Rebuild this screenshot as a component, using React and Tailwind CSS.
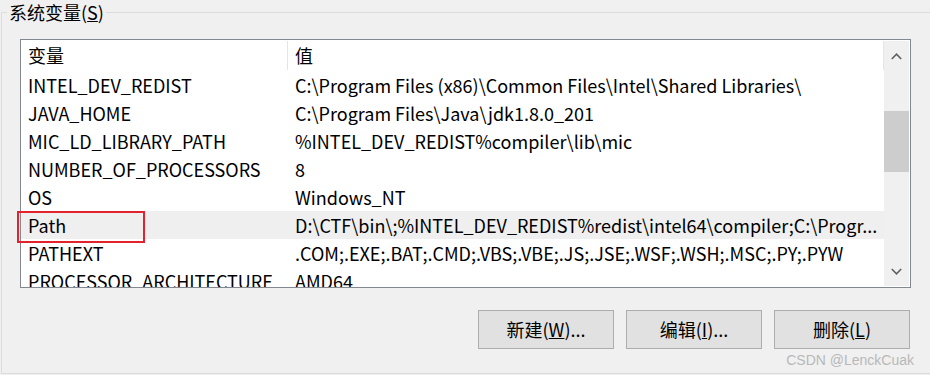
import React from "react";

const rows = [
  ["INTEL_DEV_REDIST", "C:\\Program Files (x86)\\Common Files\\Intel\\Shared Libraries\\"],
  ["JAVA_HOME", "C:\\Program Files\\Java\\jdk1.8.0_201"],
  ["MIC_LD_LIBRARY_PATH", "%INTEL_DEV_REDIST%compiler\\lib\\mic"],
  ["NUMBER_OF_PROCESSORS", "8"],
  ["OS", "Windows_NT"],
  ["Path", "D:\\CTF\\bin\\;%INTEL_DEV_REDIST%redist\\intel64\\compiler;C:\\Progr..."],
  ["PATHEXT", ".COM;.EXE;.BAT;.CMD;.VBS;.VBE;.JS;.JSE;.WSF;.WSH;.MSC;.PY;.PYW"],
  ["PROCESSOR_ARCHITECTURE", "AMD64"],
];

const Chevron = ({ up }) => (
  <svg width="11" height="7" viewBox="0 0 11 7">
    <polyline
      points={up ? "0.8,6 5.5,1.2 10.2,6" : "0.8,1 5.5,5.8 10.2,1"}
      fill="none"
      stroke="#606060"
      strokeWidth="1.6"
    />
  </svg>
);

const App = () => {
  return (
    <div className="relative w-[930px] h-[375px] overflow-hidden bg-[#f0f0f0] text-[18px] text-black font-['Noto_Sans_CJK_SC',sans-serif]">
      <div className="mt-[12px] ml-[1px] h-[362px] border-l border-t border-b border-[#dcdcdc] pl-[18px] pt-[26px]">
        {/* list view */}
        <div className="flex w-[891px] h-[249px] border border-[#828790] bg-white">
          <div className="flex flex-col w-[863px] overflow-hidden">
            <div className="flex h-[31px] shrink-0 items-center">
              <div className="flex items-center w-[267px] h-[29px] pl-[7px] border-r border-[#e5e5e5]">
                变量
              </div>
              <div className="flex items-center flex-1 h-[29px] pl-[7px] border-r border-[#e5e5e5]">
                值
              </div>
            </div>
            {rows.map(([name, value]) => (
              <div
                key={name}
                className={`flex h-[28px] shrink-0 items-center whitespace-nowrap ${name === "Path" ? "bg-[#efefef]" : ""}`}
              >
                <div className="w-[267px] pl-[7px] pr-[10px] overflow-hidden">{name}</div>
                <div className="flex-1 pl-[7px] overflow-hidden">{value}</div>
              </div>
            ))}
          </div>
          {/* scrollbar */}
          <div className="w-[25px] mt-[1px] mb-[1px] bg-[#f0f0f0] flex flex-col items-center">
            <div className="h-[30px] flex items-center justify-center">
              <Chevron up />
            </div>
            <div className="h-[40px]" />
            <div className="w-full h-[61px] bg-[#cdcdcd]" />
            <div className="flex-1" />
            <div className="h-[30px] flex items-center justify-center">
              <Chevron />
            </div>
          </div>
        </div>

        {/* buttons */}
        <div className="flex justify-end gap-[12px] w-[891px] pr-[1px] mt-[22px]">
          <button className="w-[136px] h-[39px] bg-[#e1e1e1] border border-[#adadad]">
            新建(<span className="underline">W</span>)...
          </button>
          <button className="w-[136px] h-[39px] bg-[#e1e1e1] border border-[#adadad]">
            编辑(<span className="underline">I</span>)...
          </button>
          <button className="w-[136px] h-[39px] bg-[#e1e1e1] border border-[#adadad]">
            删除(<span className="underline">L</span>)
          </button>
        </div>
      </div>

      {/* group title over the frame line */}
      <div className="absolute left-[7px] top-0 px-[2px] leading-[24px] bg-[#f0f0f0]">
        系统变量(<span className="underline">S</span>)
      </div>

      {/* red annotation box */}
      <div className="absolute left-[17px] top-[211px] w-[128px] h-[32px] border-2 border-[#e3222e]" />

      {/* watermark */}
      <div className="absolute right-[16px] top-[351px] text-[14px] leading-[18px] text-[#b8b8b8] font-['Liberation_Sans',Arial,sans-serif]">
        CSDN @LenckCuak
      </div>
    </div>
  );
};

export default App;
